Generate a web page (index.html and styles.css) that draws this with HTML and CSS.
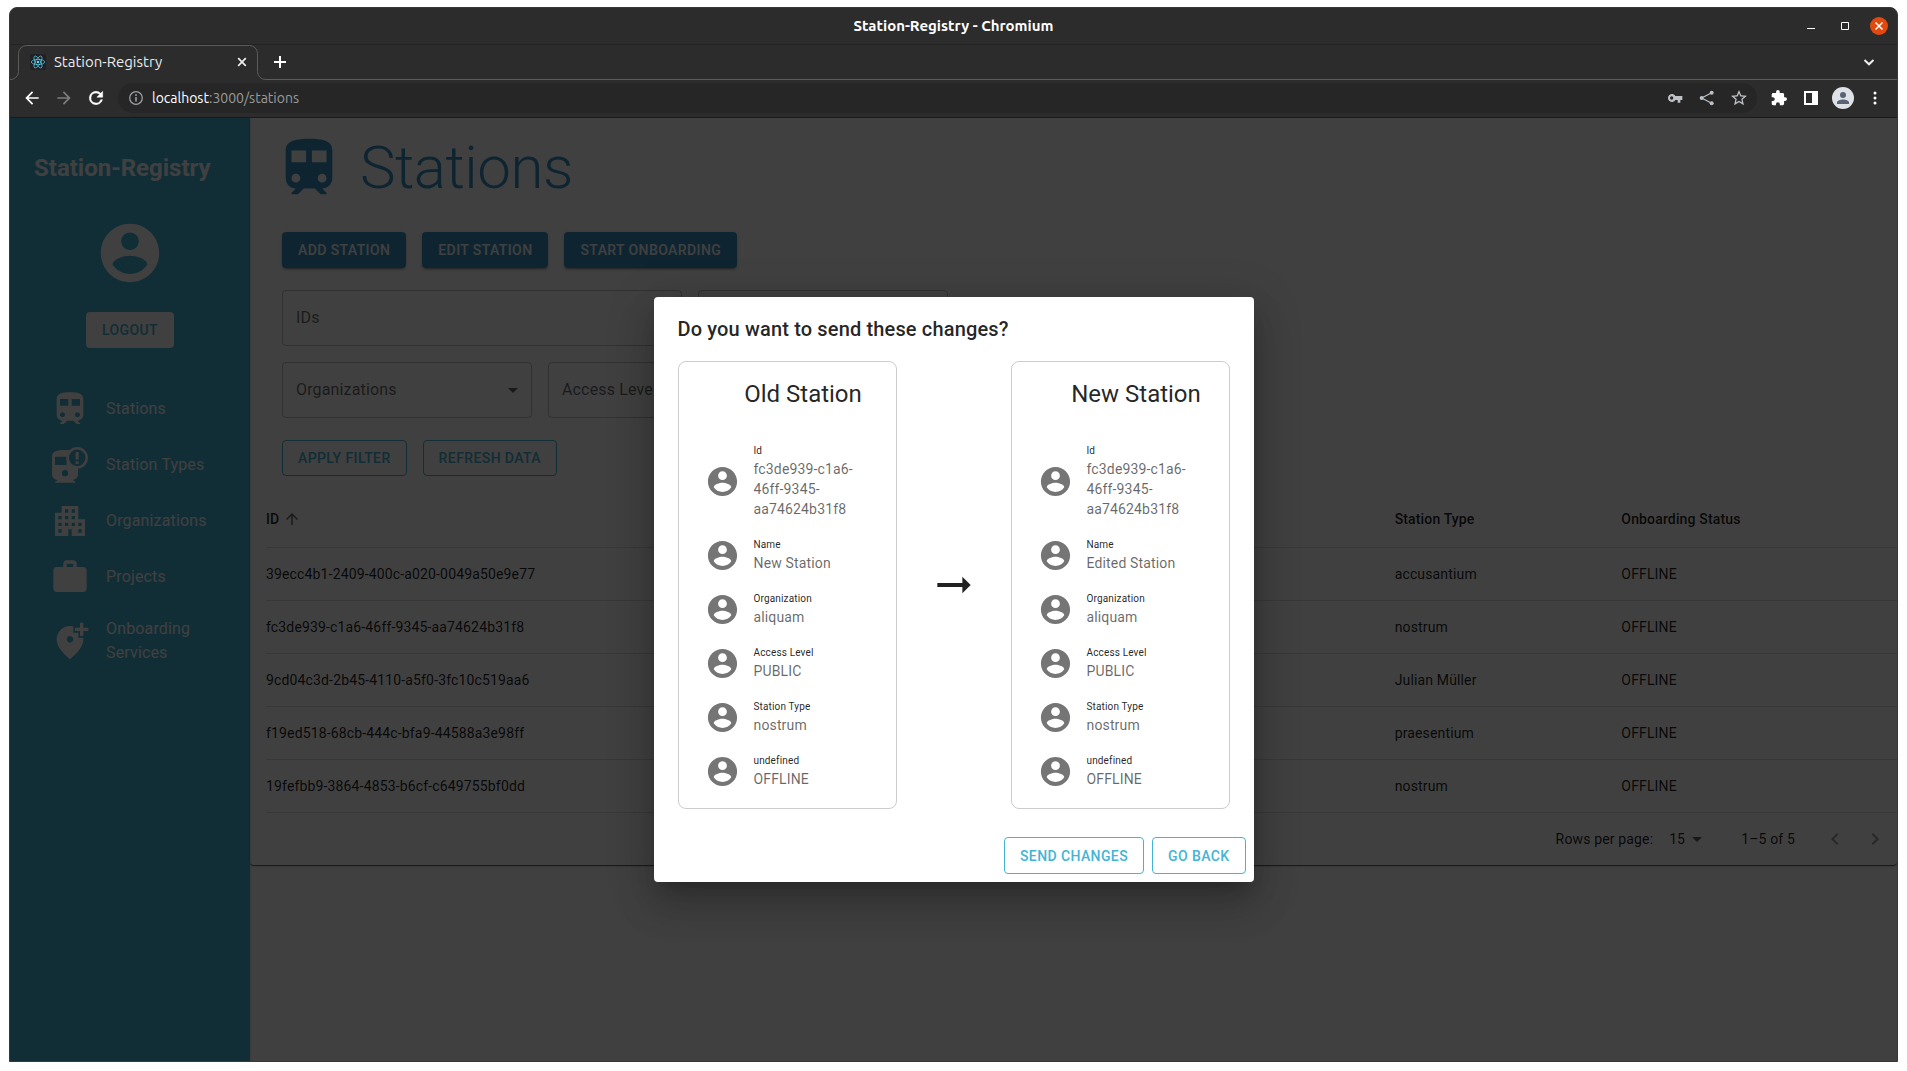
FILE: index.html
```html
<!DOCTYPE html>
<html lang="en">
<head>
<meta charset="utf-8">
<meta name="viewport" content="width=device-width, initial-scale=1">
<title>Station-Registry</title>
<link rel="stylesheet" href="styles.css">
</head>
<body>
<svg class="sprite" aria-hidden="true">
  <symbol id="train" viewBox="0 0 24 24"><path d="M12 2c-4 0-8 .5-8 4v9.500C4 17.430 5.570 19 7.500 19L6 20.500v.500h2.230l2-2H14l2 2h2v-.500L16.500 19c1.930 0 3.500-1.570 3.500-3.500V6c0-3.500-3.580-4-8-4zM7.500 17c-.830 0-1.500-.670-1.500-1.500S6.670 14 7.500 14s1.500.670 1.500 1.500S8.330 17 7.500 17zm3.500-7H6V6h5v4zm2 0V6h5v4h-5zm3.500 7c-.830 0-1.500-.670-1.500-1.500s.670-1.500 1.500-1.500 1.500.670 1.500 1.500-.670 1.500-1.500 1.500z"/></symbol>
  <symbol id="train-alert" viewBox="0 0 24 24"><path fill-rule="evenodd" d="M1.200 7C1.200 3.600 4.500 3 9 3s7.800 1 7.800 4v10.500c0 1.900-1.300 3.200-3.100 3.500l1.500 1.200v.4H3v-.4L4.500 21c-1.900-.3-3.300-1.700-3.300-3.500zM3 7v5h7V7zM9 15a1.900 1.900 0 1 0 0 3.800A1.900 1.900 0 0 0 9 15z"/><circle class="alert-ring" cx="16.300" cy="7.700" r="5.700"/><path d="M15.400 4.200h1.800v4.500h-1.800zM15.400 9.800h1.800v1.600h-1.800z"/></symbol>
  <symbol id="building" viewBox="0 0 24 24"><path d="M17 11V3H7v4H3v14h8v-4h2v4h8V11h-4zM7 19H5v-2h2v2zm0-4H5v-2h2v2zm0-4H5V9h2v2zm4 4H9v-2h2v2zm0-4H9V9h2v2zm0-4H9V5h2v2zm4 8h-2v-2h2v2zm0-4h-2V9h2v2zm0-4h-2V5h2v2zm4 12h-2v-2h2v2zm0-4h-2v-2h2v2z"/></symbol>
  <symbol id="case" viewBox="0 0 24 24"><path d="M20 6h-4V4c0-1.110-.890-2-2-2h-4c-1.110 0-2 .890-2 2v2H4c-1.110 0-1.990.890-1.990 2L2 19c0 1.110.890 2 2 2h16c1.110 0 2-.890 2-2V8c0-1.110-.890-2-2-2zm-6 0h-4V4h4v2z"/></symbol>
  <symbol id="pin-add" viewBox="0 0 24 24"><path d="M20 1v3h3v2h-3v3h-2V6h-3V4h3V1h2zm-8 12c1.100 0 2-.9 2-2s-.9-2-2-2-2 .9-2 2 .9 2 2 2zm2-9.750V7h3v3h2.920c.050.390.080.790.080 1.200 0 3.320-2.670 7.250-8 11.800-5.330-4.550-8-8.480-8-11.800C4 6.220 7.800 3 12 3c.680 0 1.350.080 2 .250z"/></symbol>
  <symbol id="account" viewBox="0 0 24 24"><path d="M12 2C6.480 2 2 6.480 2 12s4.480 10 10 10 10-4.480 10-10S17.520 2 12 2zm0 3c1.660 0 3 1.340 3 3s-1.340 3-3 3-3-1.340-3-3 1.340-3 3-3zm0 14.200c-2.500 0-4.710-1.280-6-3.220.030-1.990 4-3.080 6-3.080 1.990 0 5.970 1.090 6 3.080-1.290 1.940-3.500 3.220-6 3.220z"/></symbol>
  <symbol id="arrow-left" viewBox="0 0 24 24"><path d="M20 11H7.830l5.590-5.590L12 4l-8 8 8 8 1.410-1.410L7.830 13H20v-2z"/></symbol>
  <symbol id="arrow-right" viewBox="0 0 24 24"><path d="M12 4l-1.410 1.410L16.170 11H4v2h12.170l-5.580 5.590L12 20l8-8z"/></symbol>
  <symbol id="arrow-up" viewBox="0 0 24 24"><path d="M4 12l1.410 1.410L11 7.830V20h2V7.830l5.580 5.590L20 12l-8-8-8 8z"/></symbol>
  <symbol id="drop" viewBox="0 0 24 24"><path d="M7 10l5 5 5-5z"/></symbol>
  <symbol id="chevron-left" viewBox="0 0 24 24"><path d="M15.410 7.410L14 6l-6 6 6 6 1.410-1.410L10.830 12z"/></symbol>
  <symbol id="chevron-right" viewBox="0 0 24 24"><path d="M8.590 16.590L13.170 12 8.590 7.410 10 6l6 6-6 6z"/></symbol>
</svg>

<div class="window">
  <header class="titlebar">
    <div class="window-title">Station-Registry - Chromium</div>
    <div class="window-controls">
      <button class="window-button" aria-label="Minimize"><svg viewBox="0 0 18 18"><path d="M5 11.500h8" stroke="#fff"/></svg></button>
      <button class="window-button" aria-label="Maximize"><svg viewBox="0 0 18 18"><path d="M5.500 5.500h7v7h-7z" fill="none" stroke="#fff"/></svg></button>
      <button class="window-button close" aria-label="Close"><svg viewBox="0 0 18 18"><path d="M5.500 5.500l7 7M12.500 5.500l-7 7" stroke="#fff" stroke-width="1.500"/></svg></button>
    </div>
  </header>

  <div class="tabstrip">
    <div class="tab">
      <svg class="tab-shape" viewBox="0 0 256 35" aria-hidden="true"><path d="M0 34.500a8 8 0 0 0 8.500-8V8.500a8 8 0 0 1 8-8h223a8 8 0 0 1 8 8v18a8 8 0 0 0 8.500 8"/></svg>
      <svg class="favicon" viewBox="0 0 16 16" aria-hidden="true"><rect width="16" height="16" rx="2" fill="#202124"/><g fill="none" stroke="#61dafb" stroke-opacity=".8" stroke-width=".8"><ellipse cx="8" cy="8" rx="6.700" ry="2.600"/><ellipse cx="8" cy="8" rx="6.700" ry="2.600" transform="rotate(60 8 8)"/><ellipse cx="8" cy="8" rx="6.700" ry="2.600" transform="rotate(120 8 8)"/></g><circle cx="8" cy="8" r="1.300" fill="#61dafb"/></svg>
      <span class="tab-title">Station-Registry</span>
      <button class="plain tab-close" aria-label="Close tab"><svg viewBox="0 0 16 16"><path d="M4.200 4.200l7.600 7.600M11.800 4.200l-7.600 7.600" stroke="#eee" stroke-width="1.700"/></svg></button>
    </div>
    <button class="plain new-tab" aria-label="New tab"><svg viewBox="0 0 16 16"><path d="M8 2v12M2 8h12" stroke="#fff" stroke-width="2"/></svg></button>
    <button class="plain tab-search" aria-label="Search tabs"><svg viewBox="0 0 16 16"><path d="M3.500 6L8 10.300 12.500 6" fill="none" stroke="#eee" stroke-width="2"/></svg></button>
  </div>

  <div class="toolbar">
    <button class="tool" aria-label="Back"><svg class="i20"><use href="#arrow-left"/></svg></button>
    <button class="tool faded" aria-label="Forward"><svg class="i20"><use href="#arrow-right"/></svg></button>
    <button class="tool" aria-label="Reload"><svg class="i20" viewBox="0 0 24 24"><path d="M17.650 6.350A7.960 7.960 0 0 0 12 4a8 8 0 1 0 7.730 10h-2.080A6 6 0 1 1 12 6c1.660 0 3.140.690 4.220 1.780L13 11h7V4z" stroke="currentColor" stroke-width=".6"/></svg></button>
    <div class="address">
      <svg class="i16" viewBox="0 0 16 16" aria-hidden="true"><circle cx="8" cy="8" r="6.300" fill="none" stroke="#9aa0a6" stroke-width="1.300"/><path d="M7.200 7h1.600v4.500H7.200zM7.200 4.300h1.600v1.600H7.200z" fill="#9aa0a6"/></svg>
      <span class="url"><b>localhost</b>:3000/stations</span>
      <button class="tool grey" aria-label="Passwords"><svg class="i16" viewBox="0 0 24 24"><path fill-rule="evenodd" d="M12.650 9A6 6 0 1 0 12.650 15H16v4h4v-4h3V9zM7 14.500a2.500 2.500 0 1 1 0-5 2.500 2.500 0 0 1 0 5z"/></svg></button>
      <button class="tool grey" aria-label="Share"><svg class="i16" viewBox="0 0 24 24"><path d="M19 4L4 12l15 8" fill="none" stroke="currentColor" stroke-width="1.800"/><circle cx="19" cy="4" r="3"/><circle cx="4" cy="12" r="3"/><circle cx="19" cy="20" r="3"/></svg></button>
      <button class="tool grey" aria-label="Bookmark"><svg class="i16" viewBox="2 2 20 20"><path d="M22 9.240l-7.190-.620L12 2 9.190 8.630 2 9.240l5.460 4.730L5.820 21 12 17.270 18.180 21l-1.630-7.030L22 9.240zM12 15.400l-3.760 2.270 1-4.280-3.320-2.880 4.380-.380L12 6.100l1.710 4.040 4.380.380-3.320 2.880 1 4.280L12 15.400z"/></svg></button>
    </div>
    <button class="tool" aria-label="Extensions"><svg class="i16" viewBox="1 1 22 22"><path d="M20.500 11H19V7c0-1.100-.9-2-2-2h-4V3.500a2.500 2.500 0 0 0-5 0V5H4c-1.100 0-2 .9-2 2v3.800h1.500a2.700 2.700 0 0 1 0 5.400H2V20c0 1.100.9 2 2 2h3.800v-1.500a2.700 2.700 0 0 1 5.400 0V22H17c1.100 0 2-.9 2-2v-4h1.500a2.500 2.500 0 0 0 0-5z"/></svg></button>
    <button class="tool" aria-label="Side panel"><svg class="i16" viewBox="0 0 16 16"><path fill-rule="evenodd" d="M1 1h14v14H1zm2 2v10h6V3z"/></svg></button>
    <button class="tool" aria-label="Profile"><svg class="i22" viewBox="0 0 22 22"><circle cx="11" cy="11" r="11" fill="#dee1e6"/><circle cx="11" cy="8" r="3" fill="#5a6375"/><path d="M5 17v-1.500c0-2 3.500-3 6-3s6 1 6 3V17z" fill="#5a6375"/></svg></button>
    <button class="tool" aria-label="Menu"><svg class="i16" viewBox="0 0 16 16"><circle cx="8" cy="3" r="1.500"/><circle cx="8" cy="8" r="1.500"/><circle cx="8" cy="13" r="1.500"/></svg></button>
  </div>

  <div class="app">
    <aside class="sidebar">
      <div class="brand">Station-Registry</div>
      <svg class="avatar" aria-hidden="true"><use href="#account"/></svg>
      <button class="btn logout">LOGOUT</button>
      <nav class="nav">
        <a href="#stations"><svg><use href="#train"/></svg><span>Stations</span></a>
        <a href="#types"><svg><use href="#train-alert"/></svg><span>Station Types</span></a>
        <a href="#organizations"><svg><use href="#building"/></svg><span>Organizations</span></a>
        <a href="#projects"><svg><use href="#case"/></svg><span>Projects</span></a>
        <a href="#onboarding"><svg><use href="#pin-add"/></svg><span>Onboarding Services</span></a>
      </nav>
    </aside>

    <main class="main">
      <section class="paper">
        <div class="page-head"><svg aria-hidden="true"><use href="#train"/></svg><h1>Stations</h1></div>
        <div class="row actions">
          <button class="btn contained">ADD STATION</button>
          <button class="btn contained">EDIT STATION</button>
          <button class="btn contained">START ONBOARDING</button>
        </div>
        <div class="row">
          <input class="field wide" type="text" placeholder="IDs" aria-label="IDs">
          <input class="field" type="text" aria-label="Name">
        </div>
        <div class="row">
          <div class="select"><select class="field" aria-label="Organizations"><option>Organizations</option></select><svg aria-hidden="true"><use href="#drop"/></svg></div>
          <div class="select"><select class="field" aria-label="Access Level"><option>Access Level</option></select><svg aria-hidden="true"><use href="#drop"/></svg></div>
        </div>
        <div class="row filters">
          <button class="btn outlined">APPLY FILTER</button>
          <button class="btn outlined">REFRESH DATA</button>
        </div>
        <div class="table-wrap">
          <table>
            <thead><tr><th class="col-id" scope="col"><span class="sort">ID<svg aria-hidden="true"><use href="#arrow-up"/></svg></span></th><th class="col-type" scope="col">Station Type</th><th scope="col">Onboarding Status</th></tr></thead>
            <tbody>
              <tr><td>39ecc4b1-2409-400c-a020-0049a50e9e77</td><td>accusantium</td><td>OFFLINE</td></tr>
              <tr><td>fc3de939-c1a6-46ff-9345-aa74624b31f8</td><td>nostrum</td><td>OFFLINE</td></tr>
              <tr><td>9cd04c3d-2b45-4110-a5f0-3fc10c519aa6</td><td>Julian Müller</td><td>OFFLINE</td></tr>
              <tr><td>f19ed518-68cb-444c-bfa9-44588a3e98ff</td><td>praesentium</td><td>OFFLINE</td></tr>
              <tr><td>19fefbb9-3864-4853-b6cf-c649755bf0dd</td><td>nostrum</td><td>OFFLINE</td></tr>
            </tbody>
          </table>
        </div>
        <div class="pager">
          <label for="rows">Rows per page:</label>
          <div class="rows-select"><select id="rows"><option>15</option></select><svg aria-hidden="true"><use href="#drop"/></svg></div>
          <span class="range">1–5 of 5</span>
          <button class="plain page-button" aria-label="Previous page"><svg><use href="#chevron-left"/></svg></button>
          <button class="plain page-button" aria-label="Next page"><svg><use href="#chevron-right"/></svg></button>
        </div>
      </section>
    </main>

    <div class="backdrop">
      <dialog class="dialog" open aria-labelledby="dialog-title">
        <h2 id="dialog-title">Do you want to send these changes?</h2>
        <div class="compare">
          <section class="card">
            <h3>Old Station</h3>
            <dl>
              <div class="entry"><svg><use href="#account"/></svg><div><dt>Id</dt><dd>fc3de939-c1a6-46ff-9345-aa74624b31f8</dd></div></div>
              <div class="entry"><svg><use href="#account"/></svg><div><dt>Name</dt><dd>New Station</dd></div></div>
              <div class="entry"><svg><use href="#account"/></svg><div><dt>Organization</dt><dd>aliquam</dd></div></div>
              <div class="entry"><svg><use href="#account"/></svg><div><dt>Access Level</dt><dd>PUBLIC</dd></div></div>
              <div class="entry"><svg><use href="#account"/></svg><div><dt>Station Type</dt><dd>nostrum</dd></div></div>
              <div class="entry"><svg><use href="#account"/></svg><div><dt>undefined</dt><dd>OFFLINE</dd></div></div>
            </dl>
          </section>
          <svg class="compare-arrow" viewBox="0 0 24 24" aria-hidden="true"><path d="M16.010 11H4v2h12.010v3L20 12l-3.990-4z"/></svg>
          <section class="card">
            <h3>New Station</h3>
            <dl>
              <div class="entry"><svg><use href="#account"/></svg><div><dt>Id</dt><dd>fc3de939-c1a6-46ff-9345-aa74624b31f8</dd></div></div>
              <div class="entry"><svg><use href="#account"/></svg><div><dt>Name</dt><dd>Edited Station</dd></div></div>
              <div class="entry"><svg><use href="#account"/></svg><div><dt>Organization</dt><dd>aliquam</dd></div></div>
              <div class="entry"><svg><use href="#account"/></svg><div><dt>Access Level</dt><dd>PUBLIC</dd></div></div>
              <div class="entry"><svg><use href="#account"/></svg><div><dt>Station Type</dt><dd>nostrum</dd></div></div>
              <div class="entry"><svg><use href="#account"/></svg><div><dt>undefined</dt><dd>OFFLINE</dd></div></div>
            </dl>
          </section>
        </div>
        <div class="dialog-actions">
          <button class="btn outlined">SEND CHANGES</button>
          <button class="btn outlined">GO BACK</button>
        </div>
      </dialog>
    </div>
  </div>
</div>
</body>
</html>
```

FILE: styles.css
```css
:root {
  --primary: #44b4d6;
  --primary-dark: #3a94c4;
  --text: rgba(0, 0, 0, .87);
  --muted: rgba(0, 0, 0, .6);
  --chrome: #2c2c2c;
}
* { box-sizing: border-box; }
body {
  margin: 0;
  padding: 7px 9px 9px;
  background: #fff;
  color: var(--text);
  font: 14px/20px Roboto, sans-serif;
}
button, input, select { font: inherit; color: inherit; }
button { border: 0; padding: 0; background: none; cursor: pointer; }
svg { display: block; fill: currentColor; flex: none; }
.sprite { display: none; }

.window {
  display: flex;
  flex-direction: column;
  min-height: calc(100vh - 16px);
  overflow: hidden;
  border: 1px solid #383838;
  border-radius: 8px 8px 0 0;
  background: var(--chrome);
}

/* Browser frame */
.titlebar, .tabstrip, .toolbar { font-family: Ubuntu, "Noto Sans", sans-serif; color: #fff; }
.titlebar {
  display: grid;
  grid-template-columns: 1fr auto 1fr;
  align-items: center;
  height: 37px;
  border-bottom: 1px solid #232323;
}
.window-title { grid-column: 2; font-size: 15px; font-weight: 700; }
.window-controls { display: flex; justify-content: flex-end; gap: 16px; padding-right: 9px; }
.window-button { width: 18px; height: 18px; border-radius: 50%; }
.window-button.close { background: #e2490f; }
.window-button svg { width: 18px; height: 18px; }

.tabstrip {
  display: flex;
  align-items: center;
  height: 35px;
  border-bottom: 1px solid #5c5c5c;
}
.tab {
  position: relative;
  display: flex;
  align-items: center;
  width: 256px;
  height: 35px;
  margin-bottom: -1px;
  padding: 0 16px 2px 20px;
  background: var(--chrome);
}
.tab-shape { position: absolute; inset: 0; width: 256px; height: 35px; fill: none; stroke: #5c5c5c; }
.favicon { width: 16px; height: 16px; }
.tab-title { flex: 1; padding-left: 8px; font-size: 15px; color: #e8eaed; }
.plain svg { width: 16px; height: 16px; }
.new-tab { margin-left: 6px; }
.tab-search { margin-left: auto; margin-right: 20px; }

.toolbar {
  display: flex;
  align-items: center;
  height: 38px;
  padding: 0 6px 1px;
  border-bottom: 1px solid #1b1b1b;
}
.tool { display: grid; place-items: center; width: 32px; height: 30px; }
.tool.faded { color: #7c7c7c; }
.tool.grey { color: #bdc1c6; }
.i16 { width: 16px; height: 16px; }
.i20 { width: 20px; height: 20px; }
.i22 { width: 22px; height: 22px; }
.address {
  flex: 1;
  display: flex;
  align-items: center;
  height: 30px;
  margin: 0 6px;
  padding: 0 2px 0 10px;
  border-radius: 15px;
  background: #262626;
}
.url { flex: 1; padding-left: 8px; color: #9a9a9a; }
.url b { font-weight: 400; color: #fff; }

/* Application */
.app { position: relative; flex: 1; display: flex; background: #fff; }
.sidebar {
  display: flex;
  flex-direction: column;
  align-items: center;
  width: 240px;
  padding-top: 34px;
  background: var(--primary);
  color: #fff;
  box-shadow: 0 1px 3px rgba(0, 0, 0, .2);
}
.brand { align-self: flex-start; margin-left: 24px; font-size: 24px; line-height: 32px; font-weight: 700; }
.avatar { width: 70px; height: 70px; margin: 34px 0 24px; }
.nav { align-self: stretch; margin-top: 33px; }
.nav a {
  display: flex;
  align-items: center;
  gap: 16px;
  min-height: 56px;
  padding: 12px 24px 12px 40px;
  color: inherit;
  font-size: 16px;
  line-height: 24px;
  letter-spacing: .15px;
  text-decoration: none;
}
.nav svg { width: 40px; height: 40px; margin: -4px 0; }
.alert-ring { fill: var(--primary); stroke: currentColor; stroke-width: 1.5px; }

.btn {
  min-height: 36px;
  padding: 5px 15px;
  border: 1px solid transparent;
  border-radius: 4px;
  font-size: 14px;
  line-height: 24px;
  font-weight: 500;
  letter-spacing: .4px;
  white-space: nowrap;
}
.contained {
  background: var(--primary-dark);
  color: #fff;
  box-shadow: 0 3px 1px -2px rgba(0, 0, 0, .2), 0 2px 2px rgba(0, 0, 0, .14), 0 1px 5px rgba(0, 0, 0, .12);
}
.outlined { border-color: var(--primary); color: var(--primary); }
.logout { background: #fff; color: var(--primary); }

.main { flex: 1; min-width: 0; }
.paper {
  padding-top: 15px;
  border-radius: 4px;
  box-shadow: 0 2px 1px -1px rgba(0, 0, 0, .4), 0 1px 1px rgba(0, 0, 0, .3), 0 1px 3px rgba(0, 0, 0, .12);
}
.page-head { display: flex; align-items: center; gap: 16px; padding-left: 24px; color: var(--primary-dark); }
.page-head svg { width: 70px; height: 70px; }
h1 { margin: 0; font-size: 60px; line-height: 68px; font-weight: 300; letter-spacing: -.5px; }
.row { display: flex; gap: 16px; padding: 0 32px; margin-bottom: 16px; }
.actions { margin: 29px 0 22px; }
.filters { margin: 22px 0 14px; }
.field {
  width: 250px;
  height: 56px;
  padding: 0 13px 1px;
  border: 1px solid rgba(0, 0, 0, .23);
  border-radius: 4px;
  background: transparent;
  color: var(--muted);
  font-size: 16px;
  letter-spacing: .15px;
  appearance: none;
}
.field::placeholder { color: var(--muted); opacity: 1; }
.field.wide { width: 400px; }
.select { position: relative; }
.select svg { position: absolute; right: 7px; top: 16px; width: 24px; height: 24px; color: var(--muted); pointer-events: none; }

.table-wrap { padding-left: 16px; }
table { width: 100%; border-collapse: collapse; table-layout: fixed; letter-spacing: .15px; }
th, td { height: 53px; padding: 0; border-bottom: 1px solid #e0e0e0; text-align: left; }
th { height: 57px; padding-top: 2px; font-weight: 500; }
.col-id { width: 69.2%; }
.col-type { width: 13.9%; }
.sort { display: flex; align-items: center; gap: 4px; }
.sort svg { width: 18px; height: 18px; color: var(--muted); }
.pager { display: flex; align-items: center; justify-content: flex-end; height: 52px; padding-right: 2px; letter-spacing: .15px; }
.rows-select { position: relative; margin: 0 22px 0 16px; }
.rows-select select { width: 50px; height: 24px; padding: 0; border: 0; background: none; appearance: none; }
.rows-select svg { position: absolute; right: 10px; top: 0; width: 24px; height: 24px; color: var(--muted); pointer-events: none; }
.range { margin-right: 20px; }
.page-button { display: grid; place-items: center; width: 40px; height: 40px; color: rgba(0, 0, 0, .38); }
.page-button svg { width: 24px; height: 24px; }

/* Confirmation dialog */
.backdrop {
  position: absolute;
  inset: 0;
  display: grid;
  place-items: center;
  background: rgba(0, 0, 0, .75);
}
.dialog {
  position: static;
  width: 600px;
  max-width: calc(100% - 64px);
  margin: 0;
  padding: 0;
  border: 0;
  border-radius: 4px;
  background: #fff;
  color: var(--text);
  box-shadow: 0 11px 15px -7px rgba(0, 0, 0, .2), 0 24px 38px 3px rgba(0, 0, 0, .14), 0 9px 46px 8px rgba(0, 0, 0, .12);
}
h2 { margin: 0; padding: 16px 24px; font-size: 20px; line-height: 32px; font-weight: 500; letter-spacing: .15px; }
.compare { display: flex; align-items: center; justify-content: space-between; padding: 0 24px 20px; }
.compare-arrow { width: 50px; height: 50px; }
.card { width: 219px; padding: 16px 24px 9px 26px; border: 1px solid rgba(0, 0, 0, .2); border-radius: 8px; }
h3 { margin: 0 0 25px; padding-left: 30px; font-size: 24px; line-height: 32px; font-weight: 400; text-align: center; }
dl { margin: 0; }
.entry { display: flex; align-items: center; gap: 14px; padding: 8px 0 10px; color: var(--muted); }
.entry svg { width: 35px; height: 35px; color: #757575; }
dt { font-size: 10px; line-height: 16px; letter-spacing: .15px; color: var(--text); }
dd { margin: 0; letter-spacing: .15px; }
.dialog-actions { display: flex; justify-content: flex-end; gap: 8px; padding: 8px; }
.dialog-actions .btn { min-height: 37px; }
```
